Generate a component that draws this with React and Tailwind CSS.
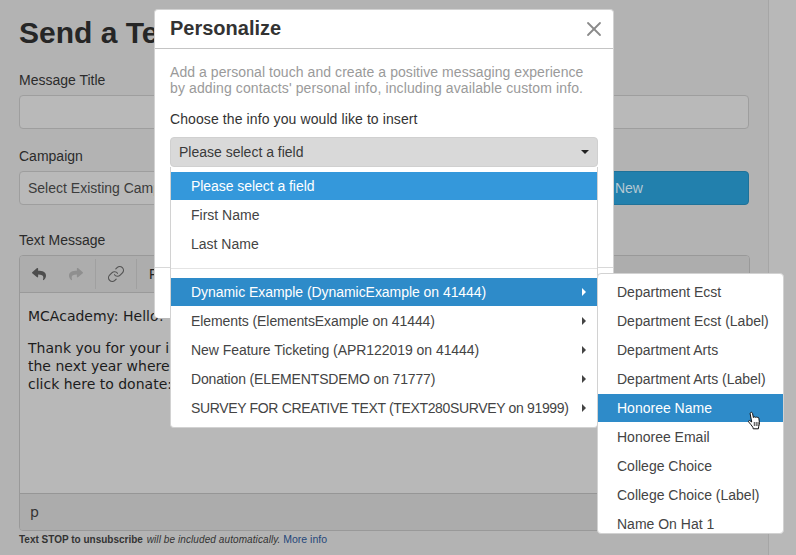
import React from "react";
import { FaReply, FaShare } from "react-icons/fa";
import { Link as LinkIcon, X } from "lucide-react";

const sans = "font-['Liberation_Sans',Arial,sans-serif]";

function Caret() {
  return <span className="w-0 h-0 border-y-[4px] border-y-transparent border-l-[4px] border-l-current" />;
}

function MenuItem({ label, color = "", arrow = false, pad = "pl-[20px]", track = "" }) {
  return (
    <div className={`h-[28px] mb-px flex items-center justify-between ${pad} pr-[11px] whitespace-nowrap ${color || "text-[#444]"}`}>
      <span className={track}>{label}</span>
      {arrow && <Caret />}
    </div>
  );
}

function Hand() {
  return (
    <svg viewBox="0 0 16 19" className="absolute left-[747px] top-[411px] w-[16px] h-[19px]">
      <path
        d="M3.6 1.6c.7-.6 1.7-.2 1.9.7l.9 4.2c.2-.9 1.6-1 1.9-.1.3-.7 1.5-.7 1.8.2.4-.5 1.5-.4 1.7.5l.6 4.1c.2 1.5-.1 2.9-.7 4.2l-.3 2.4H6.2l-.3-1.5C4.9 14.6 3.2 12.8 1.7 11c-.6-.8.3-1.9 1.2-1.3l1.8 1.3L3.2 3c-.1-.6 0-1 .4-1.4z"
        fill="#fff"
        stroke="#111"
        strokeWidth="1"
        strokeLinejoin="round"
      />
      <path d="M7.3 11v4M9.2 11v4M11 11v4" stroke="#111" strokeWidth="0.8" />
    </svg>
  );
}

export default function App() {
  return (
    <div className={`relative w-[796px] h-[555px] overflow-hidden bg-[#b3b3b3] flex text-[14px] text-[#2b2b2b] ${sans}`}>
      {/* page behind the overlay */}
      <main className="w-[769px] shrink-0 border-r border-[#a6a6a6] pl-[19px] pr-[19px]">
        <h1 className="text-[30px] leading-[38px] font-bold text-[#262626] mt-[14px] whitespace-nowrap">Send a Text Message</h1>
        <label className="block mt-[20px] leading-[16px]">Message Title</label>
        <div className="mt-[7px] h-[34px] w-[730px] rounded-[4px] border border-[#9e9e9e] bg-[#b9b9b9]" />
        <label className="block mt-[19px] leading-[16px]">Campaign</label>
        <div className="mt-[7px] flex w-[730px] h-[34px] gap-[10px]">
          <div className="w-[434px] rounded-[4px] border border-[#9e9e9e] bg-[#b9b9b9] pl-[8px] flex items-center text-[#3c3c3c] whitespace-nowrap">Select Existing Campaign</div>
          <div className="flex-1 rounded-[4px] bg-[#2280ad] border border-[#1f7299] flex items-center justify-center text-[#b6c9d3]">Create New</div>
        </div>
        <label className="block mt-[27px] leading-[16px]">Text Message</label>
        <div className="mt-[7px] w-[731px] h-[276px] rounded-[4px] border border-[#999] bg-[#b8b8b8] flex flex-col overflow-hidden">
          <div className="h-[37px] shrink-0 border-b border-[#9a9a9a] bg-[#adadad] flex items-center">
            <div className="w-[76px] h-[30px] flex items-center pl-[12px] gap-[23px] border-r border-[#a0a0a0]">
              <FaReply className="text-[#4d4d4d] w-[14px] h-[14px]" />
              <FaShare className="text-[#8f8f8f] w-[14px] h-[14px]" />
            </div>
            <div className="w-[41px] h-[30px] flex items-center justify-center border-r border-[#a0a0a0]">
              <LinkIcon className="text-[#555] w-[18px] h-[18px]" strokeWidth={1.6} />
            </div>
            <span className="ml-[12px] text-[#222]">Formats</span>
          </div>
          <div className="flex-1 pl-[8px] pt-[14px] text-[14px] leading-[18px] text-[#1c1c1c] whitespace-nowrap font-['DejaVu_Sans',Verdana,sans-serif]">
            <p>MCAcademy: Hello!</p>
            <p className="mt-[14px]">Thank you for your involvement</p>
            <p>the next year where we will help</p>
            <p>click here to donate: link</p>
          </div>
          <div className="h-[37px] shrink-0 border-t border-[#969696] bg-[#acacac] pl-[10px] flex items-center text-[#333] font-['DejaVu_Sans',Verdana,sans-serif]">p</div>
        </div>
        <p className="mt-[2px] text-[10px] leading-[13px] text-[#333] whitespace-nowrap">
          <b>Text STOP to unsubscribe</b> <i className="tracking-[0.09px] ml-px">will be included automatically.</i> <span className="text-[#25477a] text-[10.5px]">More info</span>
        </p>
      </main>
      <div className="flex-1 bg-[#b8b8b8]" />

      {/* modal */}
      <div className="absolute left-[154px] top-[9px] w-[460px] h-[309px] rounded-[4px] bg-white flex flex-col border border-[#d2d2d2] border-b-0">
        <div className="h-[39px] shrink-0 border-b border-[#c4c4c4] pl-[15px] pr-[7px] flex items-center justify-between">
          <span className="text-[20px] font-bold text-[#333] leading-[24px] pb-[3px]">Personalize</span>
          <X className="w-[24px] h-[24px] text-[#8a8a8a]" strokeWidth={1.8} />
        </div>
        <div className="px-[15px] pt-[15px]">
          <p className="leading-[16px] text-[#9a9a9a]">
            <span className="tracking-[0.065px]">Add a personal touch and create a positive messaging experience</span>
            <br />
            <span className="tracking-[0.12px]">by adding contacts' personal info, including available custom info.</span>
          </p>
          <p className="mt-[15px] leading-[16px] text-[#333] tracking-[0.1px]">Choose the info you would like to insert</p>
          <div className="mt-[10px] h-[30px] w-[428px] rounded-[4px] border border-[#d0d0d0] bg-[#d9d9d9] pl-[8px] pr-[8px] flex items-center justify-between text-[#3a3a3a]">
            <span>Please select a field</span>
            <span className="w-0 h-0 border-x-[4px] border-x-transparent border-t-[4px] border-t-[#222]" />
          </div>
        </div>
        <div className="mt-auto h-[51px] border-t border-[#d8d8d8]" />
      </div>

      {/* select menu */}
      <div className="absolute left-[170px] top-[167px] w-[428px] h-[261px] bg-white border border-[#d2d2d2] border-t-0 rounded-b-[4px] pt-[5px] text-[#444]">
        <MenuItem label="Please select a field" color="bg-[#3498db] text-white" track="tracking-[-0.05px]" />
        <MenuItem label="First Name" />
        <MenuItem label="Last Name" />
        <div className="mt-[10px] mb-[9px] h-px bg-[#e4e4e4]" />
        <MenuItem label="Dynamic Example (DynamicExample on 41444)" color="bg-[#2e8bc9] text-white" arrow track="tracking-[-0.05px]" />
        <MenuItem label="Elements (ElementsExample on 41444)" arrow track="tracking-[-0.08px]" />
        <MenuItem label="New Feature Ticketing (APR122019 on 41444)" arrow track="tracking-[-0.05px]" />
        <MenuItem label="Donation (ELEMENTSDEMO on 71777)" arrow track="tracking-[-0.15px]" />
        <MenuItem label="SURVEY FOR CREATIVE TEXT (TEXT280SURVEY on 91999)" arrow track="tracking-[-0.34px]" />
      </div>

      {/* sub menu */}
      <div className="absolute left-[597px] top-[273px] w-[187px] h-[261px] bg-white border border-[#d2d2d2] rounded-[4px] pt-[4px] overflow-hidden">
        {["Department Ecst", "Department Ecst (Label)", "Department Arts", "Department Arts (Label)"].map((t) => (
          <MenuItem key={t} label={t} pad="pl-[19px]" />
        ))}
        <MenuItem label="Honoree Name" pad="pl-[19px]" color="bg-[#2e8bc9] text-white" />
        {["Honoree Email", "College Choice", "College Choice (Label)"].map((t) => (
          <MenuItem key={t} label={t} pad="pl-[19px]" />
        ))}
        <div className="h-[24px] flex items-start pt-[6px] leading-[16px] pl-[19px] text-[#444] whitespace-nowrap">Name On Hat 1</div>
      </div>

      <Hand />
    </div>
  );
}
